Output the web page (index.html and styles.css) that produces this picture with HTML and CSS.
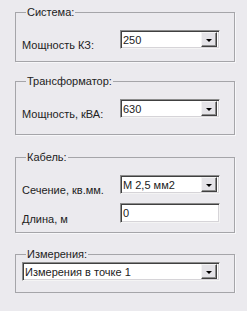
FILE: index.html
```html
<!DOCTYPE html>
<html lang="ru">
<head>
    <meta charset="UTF-8">
    <title>Параметры</title>
    <link rel="stylesheet" href="styles.css">
</head>
<body>
    <fieldset class="group g1">
        <legend>Система:</legend>
        <div class="row">
            <span class="label">Мощность КЗ:</span>
            <div class="combo"><span class="value">250</span><span class="btn"><i class="arrow"></i></span></div>
        </div>
    </fieldset>

    <fieldset class="group g2">
        <legend>Трансформатор:</legend>
        <div class="row">
            <span class="label">Мощность, кВА:</span>
            <div class="combo"><span class="value">630</span><span class="btn"><i class="arrow"></i></span></div>
        </div>
    </fieldset>

    <fieldset class="group g3">
        <legend>Кабель:</legend>
        <div class="row">
            <span class="label">Сечение, кв.мм.</span>
            <div class="combo"><span class="value">М 2,5 мм2</span><span class="btn"><i class="arrow"></i></span></div>
        </div>
        <div class="row">
            <span class="label">Длина, м</span>
            <div class="combo edit"><span class="value">0</span></div>
        </div>
    </fieldset>

    <fieldset class="group g4">
        <legend>Измерения:</legend>
        <div class="row">
            <div class="combo wide"><span class="value">Измерения в точке 1</span><span class="btn"><i class="arrow"></i></span></div>
        </div>
    </fieldset>
</body>
</html>
```

FILE: styles.css
```css
body {
    margin: 0;
    padding: 6px 12px 0 15px;
    background: #ebeaee;
    font-family: "Liberation Sans", Arial, sans-serif;
    font-size: 11px;
    color: #222;
}
.group {
    margin: 0;
    border: 1px solid #a5a5a9;
    box-shadow: 1px 1px 0 #f7f7f9;
    padding: 11px 0 0 6px;
    min-width: 0;
}
.group legend {
    padding: 0 1px;
    margin-left: 4px;
    line-height: 13px;
}
.g1 { height: 43px; margin-bottom: 13px; }
.g2 { height: 47px; margin-bottom: 16px; }
.g3 { height: 69px; margin-bottom: 15px; }
.g4 { height: 42px; padding-top: 1px; }
.row {
    display: flex;
    align-items: flex-end;
    height: 19px;
}
.row + .row {
    margin-top: 10px;
}
.label {
    width: 98px;
    padding-bottom: 1px;
    position: relative;
    top: 3px;
}
.combo {
    box-sizing: border-box;
    width: 100px;
    height: 19px;
    display: flex;
    align-items: center;
    background: #fff;
    border: 1px solid;
    border-color: #8c8c8c #f4f4f4 #f4f4f4 #8c8c8c;
    box-shadow: inset 1px 1px 0 #404040, inset -1px -1px 0 #d6d4d8;
}
.combo.wide {
    width: 198px;
}
.combo.edit {
    height: 20px;
}
.value {
    flex: 1;
    padding-left: 2px;
    white-space: nowrap;
}
.btn {
    box-sizing: border-box;
    width: 16px;
    height: 15px;
    margin-right: 2px;
    background: #e4e3e7;
    border: 1px solid;
    border-color: #f4f4f4 #404040 #404040 #f4f4f4;
    box-shadow: inset -1px -1px 0 #8c8c8c;
    display: flex;
    align-items: center;
    justify-content: center;
}
.arrow {
    width: 0;
    height: 0;
    border-left: 3px solid transparent;
    border-right: 3px solid transparent;
    border-top: 3px solid #000;
    margin-top: 1px;
}
```
